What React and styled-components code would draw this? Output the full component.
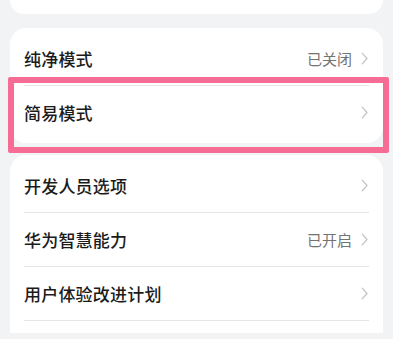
import React from 'react';
import styled, { createGlobalStyle } from 'styled-components';

const GlobalStyle = createGlobalStyle`
  html, body {
    margin: 0;
    padding: 0;
    background: #f1f3f5;
  }
  body {
    font-family: "Noto Sans CJK SC", "Noto Sans", sans-serif;
  }
`;

const Page = styled.div`
  width: 393px;
  height: 339px;
  overflow: hidden;
  padding: 0 10px 6px;
  box-sizing: border-box;
  display: flex;
  flex-direction: column;
  gap: 12px;
`;

const TopCard = styled.div`
  height: 14px;
  flex-shrink: 0;
  background: #fff;
  border-radius: 0 0 14px 14px;
  margin-bottom: 2px;
`;

const Card = styled.div`
  position: relative;
  background: #fff;
  border-radius: 16px;
  padding: 4px 14px;
  flex-shrink: 0;
  ${(p) => p.$open && `
    border-radius: 16px 16px 0 0;
    flex: 1;
    padding-bottom: 0;
  `}
`;

const Row = styled.div`
  height: 53px;
  display: flex;
  align-items: center;
  justify-content: space-between;
  border-top: ${(p) => (p.$first ? 'none' : '1px solid #e4e5e7')};
`;

const Label = styled.span`
  font-size: 17px;
  font-weight: 500;
  color: #1b1b1b;
  letter-spacing: 0.2px;
`;

const Right = styled.div`
  display: flex;
  align-items: center;
  gap: 9px;
  margin-right: 1px;
`;

const Value = styled.span`
  font-size: 15px;
  color: #737373;
`;

const Divider = styled.div`
  height: 1px;
  background: #e4e5e7;
`;

const Highlight = styled.div`
  position: absolute;
  left: -2px;
  top: 49px;
  width: 381px;
  height: 76px;
  box-sizing: border-box;
  border: 6px solid #f56c94;
  border-radius: 2px;
  pointer-events: none;
`;

const Chevron = () => (
  <svg width="7" height="13" viewBox="0 0 7 13">
    <path d="M1.2 1.2 L6 6.5 L1.2 11.8" fill="none" stroke="#c2c2c2" strokeWidth="1.2" strokeLinecap="round" strokeLinejoin="round" />
  </svg>
);

const Item = ({ label, value, first }) => (
  <Row $first={first}>
    <Label>{label}</Label>
    <Right>
      {value && <Value>{value}</Value>}
      <Chevron />
    </Right>
  </Row>
);

export default function App() {
  return (
    <>
      <GlobalStyle />
      <Page>
        <TopCard />
        <Card>
          <Item first label="纯净模式" value="已关闭" />
          <Item label="简易模式" />
          <Highlight />
        </Card>
        <Card $open>
          <Item first label="开发人员选项" />
          <Item label="华为智慧能力" value="已开启" />
          <Item label="用户体验改进计划" />
          <Divider />
        </Card>
      </Page>
    </>
  );
}
